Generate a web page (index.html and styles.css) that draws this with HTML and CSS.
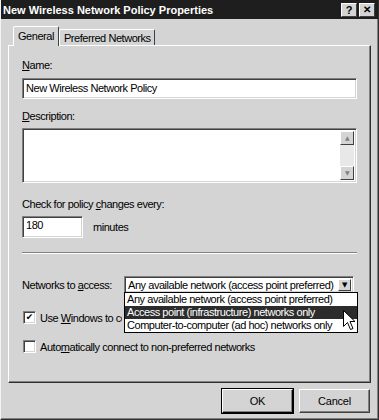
FILE: index.html
```html
<!DOCTYPE html>
<html lang="en">
<head>
    <meta charset="UTF-8">
    <title>New Wireless Network Policy Properties</title>
    <link rel="stylesheet" href="styles.css">
</head>
<body>

    <div class="window">
        <div class="titlebar">
            <span class="title">New Wireless Network Policy Properties</span>
            <span class="title-btn">?</span>
            <span class="title-btn close">&#x2715;</span>
        </div>

        <div class="tabs">
            <div class="tab selected">General</div>
            <div class="tab">Preferred Networks</div>
        </div>

        <div class="panel">
            <label class="label first"><u>N</u>ame:</label>
            <div class="field name-field">New Wireless Network Policy</div>

            <label class="label desc-label"><u>D</u>escription:</label>
            <div class="field textarea">
                <div class="scrollbar">
                    <span class="arrow-btn">&#9650;</span>
                    <span class="track"></span>
                    <span class="arrow-btn">&#9660;</span>
                </div>
            </div>

            <label class="label check-label">Check for policy <u>c</u>hanges every:</label>
            <div class="minutes-row">
                <div class="field small-field">180</div>
                <span>minutes</span>
            </div>

            <div class="separator"></div>

            <div class="networks-row">
                <span class="networks-label">Networks to <u>a</u>ccess:</span>
                <div class="combo">
                    <span class="combo-text">Any available network (access point preferred)</span>
                    <span class="combo-btn">&#9660;</span>
                    <ul class="combo-list">
                        <li>Any available network (access point preferred)</li>
                        <li class="active">Access point (infrastructure) networks only</li>
                        <li>Computer-to-computer (ad hoc) networks only</li>
                    </ul>
                    <svg class="cursor" width="13" height="21" viewBox="0 0 13 21">
                        <path d="M0.5 0.5 L0.5 16.5 L4.5 12.5 L7.5 19.5 L10 18.5 L7 11.5 L12 11.5 Z" fill="#fff" stroke="#000" stroke-width="1"/>
                    </svg>
                </div>
            </div>

            <div class="check-row first-check">
                <span class="checkbox checked">&#10004;</span>
                <span class="hidden-end">Use <u>W</u>indows to configure wireless network settings for clients</span>
            </div>

            <div class="check-row second-check">
                <span class="checkbox"></span>
                <span>Auto<u>m</u>atically connect to non-preferred networks</span>
            </div>
        </div>

        <div class="buttons">
            <button class="default">OK</button>
            <button>Cancel</button>
        </div>
    </div>

</body>
</html>
```

FILE: styles.css
```css
body {
    margin: 0;
    padding: 0;
    font-family: "Liberation Sans", Arial, sans-serif;
    font-size: 11px;
    letter-spacing: -0.45px;
    color: #000;
    background: #d4d4d4;
}

.window {
    width: 379px;
    height: 420px;
    box-sizing: border-box;
    background: #d4d4d4;
    border-right: 1px solid #303030;
    border-bottom: 1px solid #303030;
    border-left: 1px solid #f4f4f4;
    box-shadow: inset -1px -1px #808080;
    overflow: hidden;
}

.titlebar {
    height: 19px;
    background: #1e1e1e;
    display: flex;
    align-items: center;
    padding: 0 3px 0 3px;
    margin-left: -1px;
}

.title {
    flex: 1;
    color: #fff;
    font-weight: bold;
    font-size: 11px;
    letter-spacing: 0;
}

.title-btn {
    width: 16px;
    height: 14px;
    box-sizing: border-box;
    background: #d4d4d4;
    border-top: 1px solid #fff;
    border-left: 1px solid #fff;
    border-right: 1px solid #404040;
    border-bottom: 1px solid #404040;
    font-weight: bold;
    font-size: 11px;
    letter-spacing: 0;
    line-height: 12px;
    text-align: center;
}

.title-btn.close {
    margin-left: 2px;
    font-size: 10px;
}

.tabs {
    display: flex;
    align-items: flex-end;
    height: 19px;
    margin-top: 7px;
    padding-left: 12px;
    position: relative;
    z-index: 1;
}

.tab {
    height: 16px;
    box-sizing: border-box;
    padding: 1px 3px 0 4px;
    border-top: 1px solid #fff;
    border-left: 1px solid #fff;
    border-right: 1px solid #404040;
    border-radius: 2px 2px 0 0;
    line-height: 14px;
}

.tab.selected {
    height: 20px;
    margin-bottom: -1px;
    background: #d4d4d4;
    padding: 2px 4px 0 4px;
}

.panel {
    margin: 0 7px 0 7px;
    height: 338px;
    box-sizing: border-box;
    border-top: 1px solid #fff;
    border-left: 1px solid #fff;
    border-right: 1px solid #303030;
    border-bottom: 1px solid #303030;
    box-shadow: inset -1px -1px #808080;
    padding: 0 13px 0 13px;
    display: flex;
    flex-direction: column;
    align-items: flex-start;
}

.label {
    line-height: 13px;
}

.label.first {
    margin-top: 13px;
}

.desc-label {
    margin-top: 11px;
}

.check-label {
    margin-top: 15px;
}

.field {
    background: #fff;
    box-sizing: border-box;
    border-top: 1px solid #808080;
    border-left: 1px solid #808080;
    border-right: 1px solid #fff;
    border-bottom: 1px solid #fff;
    box-shadow: inset 1px 1px #404040, inset -1px -1px #d4d4d4;
}

.name-field {
    margin-top: 6px;
    width: 100%;
    height: 21px;
    line-height: 19px;
    padding-left: 3px;
}

.textarea {
    margin-top: 5px;
    width: 100%;
    height: 55px;
    display: flex;
    justify-content: flex-end;
    padding: 2px;
}

.scrollbar {
    width: 14px;
    display: flex;
    flex-direction: column;
}

.arrow-btn {
    height: 14px;
    box-sizing: border-box;
    background: #d4d4d4;
    border-top: 1px solid #fff;
    border-left: 1px solid #fff;
    border-right: 1px solid #404040;
    border-bottom: 1px solid #404040;
    font-family: "DejaVu Sans", sans-serif;
    font-size: 6px;
    line-height: 12px;
    text-align: center;
    color: #808080;
}

.track {
    flex: 1;
    background: #e8e8e8;
}

.minutes-row {
    margin-top: 5px;
    display: flex;
    align-items: center;
    gap: 10px;
}

.small-field {
    width: 61px;
    height: 22px;
    padding: 2px 0 0 3px;
}

.separator {
    margin-top: 14px;
    width: 100%;
    border-top: 1px solid #808080;
    border-bottom: 1px solid #fff;
}

.networks-row {
    margin-top: 22px;
    display: flex;
    align-items: center;
    width: 100%;
}

.networks-label {
    width: 102px;
}

.combo {
    position: relative;
    width: 230px;
    height: 17px;
    box-sizing: border-box;
    background: #fff;
    border-top: 1px solid #808080;
    border-left: 1px solid #808080;
    border-right: 1px solid #fff;
    border-bottom: 1px solid #fff;
    box-shadow: inset 1px 1px #404040, inset -1px -1px #d4d4d4;
    display: flex;
    align-items: center;
    padding: 0 2px 0 3px;
}

.combo-text {
    flex: 1;
    white-space: nowrap;
}

.combo-btn {
    width: 13px;
    height: 12px;
    box-sizing: border-box;
    background: #d4d4d4;
    border-top: 1px solid #fff;
    border-left: 1px solid #fff;
    border-right: 1px solid #404040;
    border-bottom: 1px solid #404040;
    font-family: "DejaVu Sans", sans-serif;
    font-size: 7px;
    line-height: 10px;
    text-align: center;
}

.combo-list {
    position: absolute;
    top: 15px;
    left: -1px;
    width: 234px;
    margin: 0;
    padding: 0;
    list-style: none;
    background: #fff;
    border: 1px solid #000;
    box-sizing: border-box;
    z-index: 2;
}

.combo-list li {
    height: 13px;
    line-height: 13px;
    padding-left: 2px;
    white-space: nowrap;
}

.combo-list li.active {
    background: #2c2c2c;
    color: #fff;
}

.cursor {
    position: absolute;
    left: 218px;
    top: 33px;
    z-index: 3;
}

.check-row {
    display: flex;
    align-items: center;
    gap: 4px;
    white-space: nowrap;
}

.hidden-end {
    width: 82px;
    overflow: hidden;
}

.first-check {
    margin-top: 18px;
}

.second-check {
    margin-top: 16px;
}

.checkbox {
    width: 13px;
    height: 13px;
    margin-left: 1px;
    box-sizing: border-box;
    background: #fff;
    border-top: 1px solid #808080;
    border-left: 1px solid #808080;
    border-right: 1px solid #fff;
    border-bottom: 1px solid #fff;
    box-shadow: inset 1px 1px #404040, inset -1px -1px #d4d4d4;
    font-size: 9px;
    letter-spacing: 0;
    line-height: 11px;
    text-align: center;
    font-family: "DejaVu Sans", sans-serif;
}

.buttons {
    display: flex;
    justify-content: flex-end;
    gap: 6px;
    padding: 6px 8px 0 0;
}

button {
    width: 71px;
    height: 24px;
    font-family: "Liberation Sans", Arial, sans-serif;
    font-size: 11px;
    letter-spacing: -0.2px;
    background: #d4d4d4;
    border-top: 1px solid #fff;
    border-left: 1px solid #fff;
    border-right: 1px solid #404040;
    border-bottom: 1px solid #404040;
    box-shadow: inset -1px -1px #808080;
    padding: 0;
}

button.default {
    outline: 1px solid #000;
    outline-offset: 0;
    border-right: 1px solid #000;
    border-bottom: 1px solid #000;
}
```
